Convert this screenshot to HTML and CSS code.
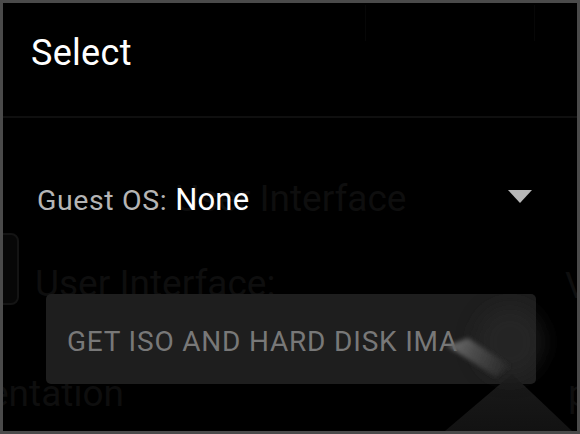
FILE: index.html
```html
<!DOCTYPE html>
<html>
<head>
<meta charset="utf-8">
<link rel="stylesheet" href="styles.css">
</head>
<body>
<div class="frame">
  <div class="backdrop">
    <div class="ghost-tab"></div>
    <div class="ghost ghost-ui">User Interface</div>
    <div class="ghost-card"></div>
    <div class="ghost ghost-label">User Interface:</div>
    <div class="ghost ghost-v">V</div>
    <div class="ghost ghost-ent">entation</div>
    <div class="ghost ghost-p">p</div>
  </div>

  <div class="dialog">
    <div class="header">
      <h1 class="title">Select</h1>
    </div>
    <div class="divider"></div>
    <div class="row">
      <span class="label">Guest OS:</span>
      <span class="value">None</span>
      <span class="spacer"></span>
      <svg class="caret" width="24" height="13" viewBox="0 0 24 13"><polygon points="0,0 24,0 12,13" fill="#b8b8b8"/></svg>
    </div>
    <div class="button">GET ISO AND HARD DISK IMA</div>
  </div>

  <svg class="sheen" viewBox="3 3 574 428" width="574" height="428">
    <defs>
      <linearGradient id="low" x1="0" y1="374" x2="0" y2="431" gradientUnits="userSpaceOnUse">
        <stop offset="0" stop-color="#1a1a1a"/>
        <stop offset="1" stop-color="#121212"/>
      </linearGradient>
      <linearGradient id="streak" x1="447" y1="345" x2="505" y2="370" gradientUnits="userSpaceOnUse">
        <stop offset="0" stop-color="#6e6e6e"/>
        <stop offset="0.45" stop-color="#4a4a4a"/>
        <stop offset="1" stop-color="#2a2a2a"/>
      </linearGradient>
      <filter id="b2" x="-50%" y="-50%" width="200%" height="200%"><feGaussianBlur stdDeviation="2"/></filter>
      <filter id="b10" x="-50%" y="-50%" width="200%" height="200%"><feGaussianBlur stdDeviation="10"/></filter>
    </defs>
    <polygon points="445,431 572,431 512,374" fill="url(#low)"/>
    <ellipse cx="510" cy="342" rx="34" ry="36" fill="#2b2b2b" opacity="0.55" filter="url(#b10)"/>
    <polygon points="447,346 468,338 510,366 496,377" fill="url(#streak)" filter="url(#b2)"/>
  </svg>
</div>
</body>
</html>
```
FILE: styles.css
```css
html, body {
  margin: 0;
  padding: 0;
  background: #000;
}

.frame {
  position: relative;
  width: 580px;
  height: 434px;
  box-sizing: border-box;
  border: 3px solid #4a4a4a;
  background: #000;
  overflow: hidden;
  font-family: Roboto, "Liberation Sans", sans-serif;
}

.backdrop {
  position: absolute;
  inset: 0;
  z-index: 0;
}

.ghost {
  position: absolute;
  font-size: 37px;
  line-height: 37px;
  color: #0e0e0e;
  white-space: nowrap;
}

.ghost-ui { left: 172px; top: 177px; }
.ghost-label { left: 32px; top: 262px; }
.ghost-v { left: 562px; top: 264px; }
.ghost-ent { left: -14px; top: 372px; }
.ghost-p { left: 565px; top: 372px; }

.ghost-card {
  position: absolute;
  left: -22px;
  top: 230px;
  width: 34px;
  height: 68px;
  border: 2px solid #141414;
  border-radius: 8px;
  background: #070707;
}

.ghost-tab {
  position: absolute;
  left: 362px;
  top: 2px;
  width: 168px;
  height: 36px;
  border-left: 1px solid #070707;
  border-right: 1px solid #070707;
}

.dialog {
  position: relative;
  z-index: 1;
  display: flex;
  flex-direction: column;
}

.header {
  height: 113px;
  padding-left: 28px;
  box-sizing: border-box;
}

.title {
  margin: 32px 0 0 0;
  font-size: 36px;
  line-height: 36px;
  font-weight: 400;
  color: #fff;
  letter-spacing: 0.3px;
}

.divider {
  height: 2px;
  background: #0f0f0f;
}

.row {
  display: flex;
  align-items: baseline;
  height: 32px;
  margin-top: 66px;
  padding-left: 34px;
  padding-right: 45px;
}

.label {
  font-size: 28.5px;
  line-height: 32px;
  color: #b5b5b5;
  letter-spacing: 0.6px;
  margin-right: 8px;
}

.value {
  font-size: 31px;
  line-height: 32px;
  color: #fff;
  letter-spacing: 0.2px;
}

.spacer { flex: 1; }

.caret {
  align-self: flex-start;
  margin-top: 6px;
}

.button {
  margin: 78px 41px 0 43px;
  height: 90px;
  box-sizing: border-box;
  padding: 34px 0 0 21px;
  background: #1e1e1e;
  border-radius: 5px;
  font-size: 28px;
  line-height: 28px;
  color: #787878;
  letter-spacing: 0.8px;
  white-space: nowrap;
  overflow: hidden;
}

.sheen {
  position: absolute;
  left: 0;
  top: 0;
  z-index: 2;
  pointer-events: none;
}
```
